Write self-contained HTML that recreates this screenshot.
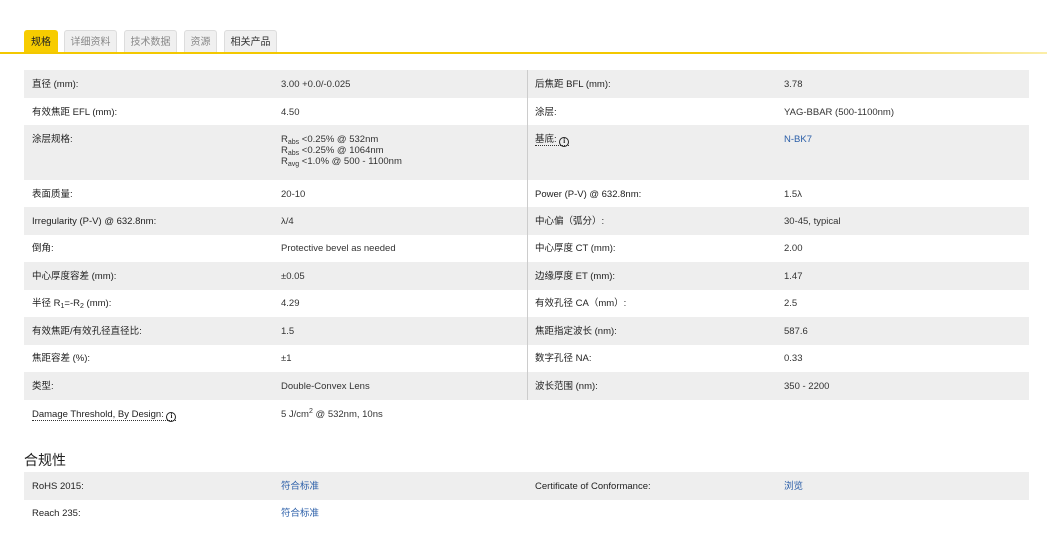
<!DOCTYPE html>
<html><head><meta charset="utf-8"><style>
*{margin:0;padding:0;box-sizing:border-box}
body{width:1047px;height:544px;background:#fff;font-family:"Liberation Sans","Noto Sans CJK SC",sans-serif;font-size:9.5px;color:#333;position:relative;overflow:hidden}
.tab{position:absolute;top:30px;height:23px;background:#f0f0f0;border:1px solid #ddd;border-bottom:none;border-radius:3px 3px 0 0;color:#888;font-size:10px;line-height:23px;text-align:center}
.tab.a{background:#f7cc00;border-color:#f7cc00;color:#222}
.line{position:absolute;left:0;top:52px;width:1047px;height:2px;background:linear-gradient(to right,#f3c800 0%,#f3c800 75%,#fbeeaa 100%)}
.row{position:absolute;left:24px;width:1005px;height:28px}
.g{background:#eeeeee}
.c{position:absolute;top:9px;white-space:nowrap;line-height:11px}
.c1{left:8px}.c2{left:257px}.c3{left:511px}.c4{left:760px}
.c1,.c3{color:#222}
.div{position:absolute;left:527px;top:70px;width:1px;height:330px;background:#ccc}
a{color:#2a5ea8;text-decoration:none}
sub{font-size:7px;vertical-align:-2px;line-height:0}
sup{font-size:7px;vertical-align:4px;line-height:0}
.u{border-bottom:1px dotted #333}
.i{display:inline-flex;align-items:center;justify-content:center;width:10px;height:10px;border:1.5px solid #222;border-radius:50%;font-size:7px;font-weight:bold;vertical-align:-1px;line-height:1;font-family:"Liberation Serif",serif}
h3{position:absolute;left:24px;top:450px;font-size:14px;font-weight:normal;color:#222}
</style></head><body>
<div class="tab a" style="left:24px;width:34px">规格</div>
<div class="tab" style="left:64px;width:53px">详细资料</div>
<div class="tab" style="left:124px;width:53px">技术数据</div>
<div class="tab" style="left:184px;width:33px">资源</div>
<div class="tab" style="left:224px;width:53px;color:#333">相关产品</div>
<div class="line"></div>

<div class="row g" style="top:70px"><span class="c c1">直径 (mm):</span><span class="c c2">3.00 +0.0/-0.025</span><span class="c c3">后焦距 BFL (mm):</span><span class="c c4">3.78</span></div>
<div class="row" style="top:98px"><span class="c c1">有效焦距 EFL (mm):</span><span class="c c2">4.50</span><span class="c c3">涂层:</span><span class="c c4">YAG-BBAR (500-1100nm)</span></div>
<div class="row g" style="top:125px;height:55px"><span class="c c1">涂层规格:</span><span class="c c2">R<sub>abs</sub> &lt;0.25% @ 532nm<br>R<sub>abs</sub> &lt;0.25% @ 1064nm<br>R<sub>avg</sub> &lt;1.0% @ 500 - 1100nm</span><span class="c c3"><span class="u">基底: <span class="i">i</span></span></span><span class="c c4"><a>N-BK7</a></span></div>
<div class="row" style="top:180px"><span class="c c1">表面质量:</span><span class="c c2">20-10</span><span class="c c3">Power (P-V) @ 632.8nm:</span><span class="c c4">1.5λ</span></div>
<div class="row g" style="top:207px"><span class="c c1">Irregularity (P-V) @ 632.8nm:</span><span class="c c2">λ/4</span><span class="c c3">中心偏（弧分）:</span><span class="c c4">30-45, typical</span></div>
<div class="row" style="top:234px"><span class="c c1">倒角:</span><span class="c c2">Protective bevel as needed</span><span class="c c3">中心厚度 CT (mm):</span><span class="c c4">2.00</span></div>
<div class="row g" style="top:262px"><span class="c c1">中心厚度容差 (mm):</span><span class="c c2">±0.05</span><span class="c c3">边缘厚度 ET (mm):</span><span class="c c4">1.47</span></div>
<div class="row" style="top:289px"><span class="c c1">半径 R<sub>1</sub>=-R<sub>2</sub> (mm):</span><span class="c c2">4.29</span><span class="c c3">有效孔径 CA（mm）:</span><span class="c c4">2.5</span></div>
<div class="row g" style="top:317px"><span class="c c1">有效焦距/有效孔径直径比:</span><span class="c c2">1.5</span><span class="c c3">焦距指定波长 (nm):</span><span class="c c4">587.6</span></div>
<div class="row" style="top:344px"><span class="c c1">焦距容差 (%):</span><span class="c c2">±1</span><span class="c c3">数字孔径 NA:</span><span class="c c4">0.33</span></div>
<div class="row g" style="top:372px"><span class="c c1">类型:</span><span class="c c2">Double-Convex Lens</span><span class="c c3">波长范围 (nm):</span><span class="c c4">350 - 2200</span></div>
<div class="row" style="top:400px"><span class="c c1"><span class="u">Damage Threshold, By Design: <span class="i">i</span></span></span><span class="c c2">5 J/cm<sup>2</sup> @ 532nm, 10ns</span></div>
<div class="div"></div>

<h3>合规性</h3>
<div class="row g" style="top:472px"><span class="c c1">RoHS 2015:</span><span class="c c2"><a>符合标准</a></span><span class="c c3">Certificate of Conformance:</span><span class="c c4"><a>浏览</a></span></div>
<div class="row" style="top:499px"><span class="c c1">Reach 235:</span><span class="c c2"><a>符合标准</a></span></div>
</body></html>
